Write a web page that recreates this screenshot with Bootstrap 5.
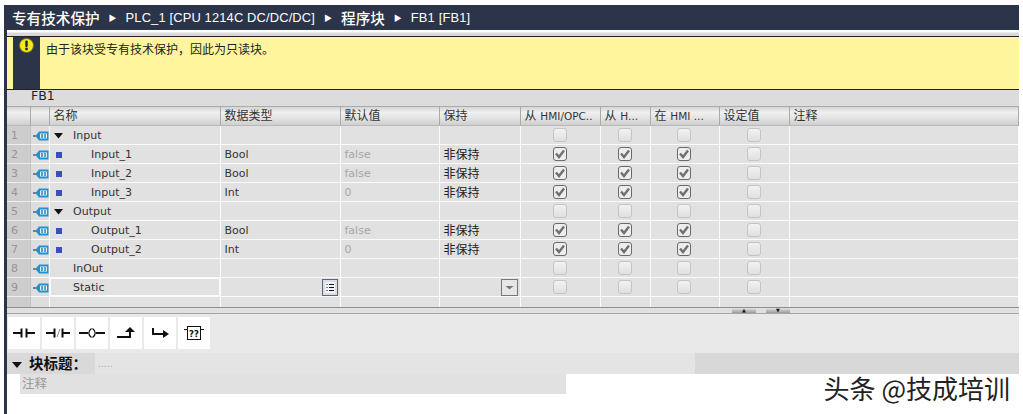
<!DOCTYPE html>
<html lang="zh-CN">
<head>
<meta charset="utf-8">
<title>FB1</title>
<link rel="stylesheet" href="https://cdn.jsdelivr.net/npm/bootstrap@5.3.0/dist/css/bootstrap.min.css">
<style>
html,body{height:414px;overflow:hidden;background:#fff}
body{font-family:"DejaVu Sans","Noto Sans CJK SC",sans-serif;font-size:11px;color:#333}
.shell{margin:5px 4px 0 4px;height:409px;border-left:3px solid #2b3449;width:1015px}
.crumb{height:25px;background:#2b3449;color:#fff;padding-left:5px;font-family:"Noto Sans CJK SC",sans-serif;font-size:13px;white-space:nowrap}
.crumb b{font-size:14.6px;font-weight:500}
.crumb .lat{font-family:"Liberation Sans","Noto Sans CJK SC",sans-serif;font-size:12.9px;letter-spacing:.15px}
.crumb i{font-style:normal;font-size:8px;margin:0 9px}
.gapstrip{height:7px;background:linear-gradient(#fff 0,#fff 2px,#d8d8d8 3px);border-bottom:1px solid #222}
.notice{height:53px;background:#fff59c;padding-left:6px;border-bottom:1px solid #222;font-family:"Noto Sans CJK SC",sans-serif;font-size:12px;color:#222}
.notice-ico{width:27px;background:#2b3449;padding-top:1px}
.notice-msg{padding:3px 0 0 6px;line-height:17px}
.fbname{height:16px;background:#dcdcdc;padding-left:24px;font-size:12.5px;line-height:12px;font-weight:500;color:#222}
.plc{table-layout:fixed;width:1012px;border-collapse:separate;border-spacing:0;margin:0;--bs-table-bg:transparent}
.plc th,.plc td{padding:2px 3.5px 0;height:19px;line-height:16px;border:0;border-right:1px solid #fbfbfb;border-bottom:1px solid #fbfbfb;background:#e1e1e1;white-space:nowrap;overflow:hidden;box-shadow:none;color:#333;vertical-align:middle}
.plc th{height:20px;padding:0 3.5px;line-height:18px;font-weight:400;font-size:12px;font-family:"DejaVu Sans","Noto Sans CJK SC",sans-serif;background:linear-gradient(#d4d4d4,#f0f0f0 30%,#e4e4e4 60%,#cfcfcf);border-top:1px solid #ababab;border-bottom:1px solid #b9b9b9;border-right:1px solid #aaa;color:#333}
.plc th small{font-size:10.5px}
.plc td.num{background:#cdcdcd;color:#959595;padding:2px 0 0 4px;border-right:1px solid #c2c2c2;border-bottom:1px solid #eee}
.plc td.ico{padding:2px 0 0 2px;background:#dedede}
.plc td.nm{padding-left:4px}
.plc td.cen{text-align:center;padding:0 2px 0 0;line-height:18px}
.plc td.cjk{font-family:"Noto Sans CJK SC",sans-serif;font-size:12px;color:#222;padding-top:0;line-height:18px}
.plc td.dim{color:#a6a6a6}
.plc td.tool{padding:0 2px 0 0;line-height:18px}
.plc tr.stub td{height:10px;line-height:9px;padding:0;border-bottom:0}
.plc td.sel{box-shadow:inset 0 0 0 1px #fbfbfb}
.indent{padding-left:18px;display:inline-block}
.indent0{padding-left:19px;display:inline-block}
.tw{display:inline-block;width:19px}
.tw.blt{padding-left:2px}
.form-check-input.tick{width:14px;height:14px;margin:2px 0 0;border-radius:3px;border:1px solid #c4c4c4;background:linear-gradient(#f2f2f2,#e0e0e0);opacity:1;vertical-align:top;float:none}
.form-check-input.tick:checked{border:1.5px solid #6a6a6a;background-color:#ededed;background-image:url("data:image/svg+xml,%3Csvg xmlns='http://www.w3.org/2000/svg' viewBox='0 0 14 14'%3E%3Cpath d='M3 6.500l3 3.500 5-6.500' fill='none' stroke='%23707070' stroke-width='2.400'/%3E%3C/svg%3E");background-size:14px 14px;background-position:center}
.split{height:7px;background:#e0e0e0;border-top:1px solid #8f8f8f;border-bottom:1px solid #a5a5a5;padding-left:725px;gap:10px}
.updown{width:24px;height:5px;background:linear-gradient(#e4e4e4,#9a9a9a);color:#111;font-size:5px;line-height:5px;text-align:center}
.lad{height:39px;background:#e9e9e9;padding:3px 0 0 1px;gap:2px}
.lad .btn{width:32px;height:32px;padding:0;border:0;border-radius:0;background:#fff;display:flex;align-items:center;justify-content:center}
.blk{height:21px;background:#e4e4e4;font-family:"Noto Sans CJK SC",sans-serif}
.blk-l{width:88px;background:#d9d9d9;color:#111;font-size:14.5px;font-weight:700;padding-left:5px;line-height:19px;white-space:nowrap}
.blk-l svg{margin-right:7px}
.blk-m{width:600px;padding-left:3px;color:#aaa;font-size:9px;line-height:22px;letter-spacing:.5px}
.blk-r{background:#d8d8d8}
.foot{height:40px}
.note{margin-left:13px;width:546px;height:20px;background:#e1e1e1;color:#999;font-family:"Noto Sans CJK SC",sans-serif;font-size:12.5px;line-height:17px;padding-left:2px}
.brand{font-family:"Noto Sans CJK SC",sans-serif;font-size:26px;line-height:28px;color:#222;padding-right:9px;white-space:nowrap}
</style>
</head>
<body>
<svg width="0" height="0" class="position-absolute">
<defs>
<symbol id="tag" viewBox="0 0 16 10"><path d="M0 5h3" stroke="#123" stroke-width="1"/><path d="M2.500 5L6 .5h9.500v9H6z" fill="#2291d2"/><rect x="7" y="2.500" width="7" height="5" fill="#e6f5fc"/><path d="M9 3v4M12 3v4" stroke="#1a6ea8" stroke-width="1.300"/></symbol>
</defs>
</svg>
<div class="shell d-flex flex-column">
  <div class="crumb d-flex align-items-center"><b>专有技术保护</b><i>▶</i><span class="lat">PLC_1 [CPU 1214C DC/DC/DC]</span><i>▶</i><b>程序块</b><i>▶</i><span class="lat">FB1 [FB1]</span></div>
  <div class="gapstrip"></div>
  <div class="notice d-flex">
    <div class="notice-ico d-flex justify-content-center"><svg width="15" height="15" viewBox="0 0 15 15"><circle cx="7.500" cy="7.500" r="7" fill="#f4e91e" stroke="#6b6a10" stroke-width=".8"/><rect x="6.300" y="2.500" width="2.400" height="6.500" rx="1" fill="#222"/><circle cx="7.500" cy="11" r="1.400" fill="#222"/></svg></div>
    <div class="notice-msg">由于该块受专有技术保护&#xFF0C;因此为只读块。</div>
  </div>
  <div class="fbname">FB1</div>
  <table class="table plc">
    <colgroup><col style="width:24px"><col style="width:19px"><col style="width:171px"><col style="width:120px"><col style="width:99px"><col style="width:81px"><col style="width:80px"><col style="width:50px"><col style="width:69px"><col style="width:70px"><col></colgroup>
    <thead><tr><th></th><th></th><th>名称</th><th>数据类型</th><th>默认值</th><th>保持</th><th>从 <small>HMI/OPC..</small></th><th>从 <small>H...</small></th><th>在 <small>HMI ...</small></th><th>设定值</th><th>注释</th></tr></thead>
    <tbody>
      <tr><td class="num">1</td><td class="ico"><svg width="16" height="10"><use href="#tag"/></svg></td><td class="nm"><span class="tw"><svg width="10" height="6" viewBox="0 0 10 6"><path d="M0 0h9L4.500 5.500z" fill="#111"/></svg></span>Input</td><td></td><td></td><td></td><td class="cen"><input class="form-check-input tick" type="checkbox" disabled aria-label="a"></td><td class="cen"><input class="form-check-input tick" type="checkbox" disabled aria-label="b"></td><td class="cen"><input class="form-check-input tick" type="checkbox" disabled aria-label="c"></td><td class="cen"><input class="form-check-input tick" type="checkbox" disabled aria-label="d"></td><td></td></tr>
      <tr><td class="num">2</td><td class="ico"><svg width="16" height="10"><use href="#tag"/></svg></td><td class="nm"><span class="tw blt"><svg width="6" height="6"><rect width="6" height="6" fill="#3b4fb8"/></svg></span><span class="indent">Input_1</span></td><td>Bool</td><td class="dim">false</td><td class="cjk">非保持</td><td class="cen"><input class="form-check-input tick" type="checkbox" checked disabled aria-label="a"></td><td class="cen"><input class="form-check-input tick" type="checkbox" checked disabled aria-label="b"></td><td class="cen"><input class="form-check-input tick" type="checkbox" checked disabled aria-label="c"></td><td class="cen"><input class="form-check-input tick" type="checkbox" disabled aria-label="d"></td><td></td></tr>
      <tr><td class="num">3</td><td class="ico"><svg width="16" height="10"><use href="#tag"/></svg></td><td class="nm"><span class="tw blt"><svg width="6" height="6"><rect width="6" height="6" fill="#3b4fb8"/></svg></span><span class="indent">Input_2</span></td><td>Bool</td><td class="dim">false</td><td class="cjk">非保持</td><td class="cen"><input class="form-check-input tick" type="checkbox" checked disabled aria-label="a"></td><td class="cen"><input class="form-check-input tick" type="checkbox" checked disabled aria-label="b"></td><td class="cen"><input class="form-check-input tick" type="checkbox" checked disabled aria-label="c"></td><td class="cen"><input class="form-check-input tick" type="checkbox" disabled aria-label="d"></td><td></td></tr>
      <tr><td class="num">4</td><td class="ico"><svg width="16" height="10"><use href="#tag"/></svg></td><td class="nm"><span class="tw blt"><svg width="6" height="6"><rect width="6" height="6" fill="#3b4fb8"/></svg></span><span class="indent">Input_3</span></td><td>Int</td><td class="dim">0</td><td class="cjk">非保持</td><td class="cen"><input class="form-check-input tick" type="checkbox" checked disabled aria-label="a"></td><td class="cen"><input class="form-check-input tick" type="checkbox" checked disabled aria-label="b"></td><td class="cen"><input class="form-check-input tick" type="checkbox" checked disabled aria-label="c"></td><td class="cen"><input class="form-check-input tick" type="checkbox" disabled aria-label="d"></td><td></td></tr>
      <tr><td class="num">5</td><td class="ico"><svg width="16" height="10"><use href="#tag"/></svg></td><td class="nm"><span class="tw"><svg width="10" height="6" viewBox="0 0 10 6"><path d="M0 0h9L4.500 5.500z" fill="#111"/></svg></span>Output</td><td></td><td></td><td></td><td class="cen"><input class="form-check-input tick" type="checkbox" disabled aria-label="a"></td><td class="cen"><input class="form-check-input tick" type="checkbox" disabled aria-label="b"></td><td class="cen"><input class="form-check-input tick" type="checkbox" disabled aria-label="c"></td><td class="cen"><input class="form-check-input tick" type="checkbox" disabled aria-label="d"></td><td></td></tr>
      <tr><td class="num">6</td><td class="ico"><svg width="16" height="10"><use href="#tag"/></svg></td><td class="nm"><span class="tw blt"><svg width="6" height="6"><rect width="6" height="6" fill="#3b4fb8"/></svg></span><span class="indent">Output_1</span></td><td>Bool</td><td class="dim">false</td><td class="cjk">非保持</td><td class="cen"><input class="form-check-input tick" type="checkbox" checked disabled aria-label="a"></td><td class="cen"><input class="form-check-input tick" type="checkbox" checked disabled aria-label="b"></td><td class="cen"><input class="form-check-input tick" type="checkbox" checked disabled aria-label="c"></td><td class="cen"><input class="form-check-input tick" type="checkbox" disabled aria-label="d"></td><td></td></tr>
      <tr><td class="num">7</td><td class="ico"><svg width="16" height="10"><use href="#tag"/></svg></td><td class="nm"><span class="tw blt"><svg width="6" height="6"><rect width="6" height="6" fill="#3b4fb8"/></svg></span><span class="indent">Output_2</span></td><td>Int</td><td class="dim">0</td><td class="cjk">非保持</td><td class="cen"><input class="form-check-input tick" type="checkbox" checked disabled aria-label="a"></td><td class="cen"><input class="form-check-input tick" type="checkbox" checked disabled aria-label="b"></td><td class="cen"><input class="form-check-input tick" type="checkbox" checked disabled aria-label="c"></td><td class="cen"><input class="form-check-input tick" type="checkbox" disabled aria-label="d"></td><td></td></tr>
      <tr><td class="num">8</td><td class="ico"><svg width="16" height="10"><use href="#tag"/></svg></td><td class="nm"><span class="indent0">InOut</span></td><td></td><td></td><td></td><td class="cen"><input class="form-check-input tick" type="checkbox" disabled aria-label="a"></td><td class="cen"><input class="form-check-input tick" type="checkbox" disabled aria-label="b"></td><td class="cen"><input class="form-check-input tick" type="checkbox" disabled aria-label="c"></td><td class="cen"><input class="form-check-input tick" type="checkbox" disabled aria-label="d"></td><td></td></tr>
      <tr><td class="num">9</td><td class="ico"><svg width="16" height="10"><use href="#tag"/></svg></td><td class="nm sel"><span class="indent0">Static</span></td><td class="tool"><svg class="d-block ms-auto" width="16" height="17" viewBox="0 0 16 17"><rect x=".5" y=".5" width="15" height="16" fill="#d8dcec" stroke="#666"/><rect x="3" y="3" width="10" height="11" fill="#f2f4fb"/><path d="M4.500 5.500h1M7 5.500h5M4.500 8.500h1M7 8.500h5M4.500 11.500h1M7 11.500h5" stroke="#111"/></svg></td><td></td><td class="tool"><svg class="d-block ms-auto" width="17" height="17" viewBox="0 0 17 17"><rect x=".5" y=".5" width="16" height="16" fill="#e6e6e6" stroke="#777"/><path d="M4.500 7h8l-4 3.500z" fill="#777"/></svg></td><td class="cen"><input class="form-check-input tick" type="checkbox" disabled aria-label="a"></td><td class="cen"><input class="form-check-input tick" type="checkbox" disabled aria-label="b"></td><td class="cen"><input class="form-check-input tick" type="checkbox" disabled aria-label="c"></td><td class="cen"><input class="form-check-input tick" type="checkbox" disabled aria-label="d"></td><td></td></tr>
      <tr class="stub"><td class="num"></td><td class="ico"></td><td></td><td></td><td></td><td></td><td></td><td></td><td></td><td></td><td></td></tr>
    </tbody>
  </table>
  <div class="split d-flex"><span class="updown">▲</span><span class="updown">▼</span></div>
  <div class="lad d-flex">
    <button class="btn" type="button" aria-label="NO"><svg width="24" height="12" viewBox="0 0 24 12" fill="none" stroke="#111" stroke-width="2"><path d="M1 6h8M9.500 1.500v9M14.500 1.500v9M15 6h8"/></svg></button>
    <button class="btn" type="button" aria-label="NC"><svg width="26" height="12" viewBox="0 0 26 12" fill="none" stroke="#111" stroke-width="2"><path d="M1 6h8M9.500 1.500v9M17.500 1.500v9M18 6h7"/><path d="M15 2l-3 8" stroke="#888" stroke-width="1"/></svg></button>
    <button class="btn" type="button" aria-label="Coil"><svg width="28" height="12" viewBox="0 0 28 12" fill="none" stroke="#111" stroke-width="2"><path d="M1 6h9M18 6h9"/><path d="M13.500 1.500Q8 6 13.500 10.500M14.500 1.500Q20 6 14.500 10.500" stroke-width="1.300"/></svg></button>
    <button class="btn" type="button" aria-label="Branch open"><svg width="20" height="12" viewBox="0 0 20 12"><path d="M1 10h13V4" fill="none" stroke="#111" stroke-width="2"/><path d="M9 5l5-5 5 5z" fill="#111"/></svg></button>
    <button class="btn" type="button" aria-label="Branch close"><svg width="18" height="10" viewBox="0 0 18 10"><path d="M2 0v6h11" fill="none" stroke="#111" stroke-width="2"/><path d="M12 2l6 4-6 4z" fill="#111"/></svg></button>
    <button class="btn" type="button" aria-label="Box"><svg width="20" height="16" viewBox="0 0 20 16" fill="none" stroke="#111"><rect x="3.500" y="1.500" width="13" height="13"/><path d="M0 4.500h3M17 4.500h3"/><text x="10" y="11.500" text-anchor="middle" font-family="DejaVu Sans" font-size="8.500" font-weight="700" fill="#111" stroke="none">??</text></svg></button>
  </div>
  <div class="blk d-flex">
    <div class="blk-l"><svg width="10" height="7" viewBox="0 0 10 7" class="align-middle"><path d="M0 0h10L5 6z" fill="#111"/></svg>块标题&#xFF1A;</div>
    <div class="blk-m">.....</div>
    <div class="blk-r flex-grow-1"></div>
  </div>
  <div class="foot d-flex justify-content-between">
    <div class="note">注释</div>
    <div class="brand">头条 @技成培训</div>
  </div>
</div>
<script src="https://cdn.jsdelivr.net/npm/bootstrap@5.3.0/dist/js/bootstrap.bundle.min.js"></script>
</body>
</html>
